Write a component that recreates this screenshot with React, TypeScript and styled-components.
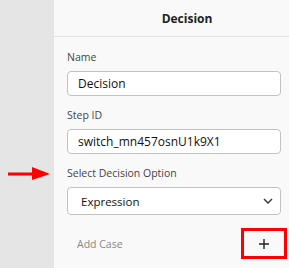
import React from "react";
import styled, { createGlobalStyle } from "styled-components";

const Global = createGlobalStyle`
  html, body { margin: 0; padding: 0; overflow: hidden; }
  body { font-family: "Open Sans", "Noto Sans", sans-serif; background: #e5e5e5; }
`;

const Page = styled.div`
  display: flex;
  width: 320px;
  height: 268px;
`;

const Side = styled.div`
  width: 54px;
  flex: none;
  background: #e5e5e5;
  display: flex;
  flex-direction: column;
  padding-top: 167px;
  box-sizing: border-box;
`;

const Panel = styled.div`
  width: 266px;
  flex: none;
  background: #f9f9f9;
  display: flex;
  flex-direction: column;
`;

const Header = styled.div`
  height: 37px;
  border-bottom: 1px solid #e2e2e2;
  display: flex;
  align-items: center;
  justify-content: center;
  font-size: 12px;
  font-weight: 700;
  color: #222;
  box-sizing: border-box;
`;

const Body = styled.div`
  padding: 13px 0 0 13px;
  display: flex;
  flex-direction: column;
`;

const Field = styled.div<{ $gap: number }>`
  display: flex;
  flex-direction: column;
  margin-bottom: ${(p) => p.$gap}px;
`;

const Label = styled.div`
  font-size: 10.5px;
  color: #444;
  line-height: 14px;
  margin-bottom: 7px;
`;

const Input = styled.div<{ $h: number }>`
  width: 214px;
  height: ${(p) => p.$h}px;
  box-sizing: border-box;
  border: 1px solid #c2c2c2;
  border-radius: 4px;
  background: #fff;
  display: flex;
  align-items: center;
  padding: 0 10px;
  font-size: 12px;
  color: #111;
`;

const SelectBox = styled(Input)`
  padding: 0 7px 0 13px;
  justify-content: space-between;
  font-size: 11.5px;
`;

const AddRow = styled.div`
  display: flex;
  align-items: center;
  justify-content: space-between;
  width: 220px;
  margin-top: 13px;
  padding-left: 10px;
  box-sizing: border-box;
`;

const AddText = styled.span`
  font-size: 10.5px;
  color: #888;
`;

const PlusBox = styled.div`
  width: 46px;
  height: 31px;
  box-sizing: border-box;
  border: 3px solid #f00;
  display: flex;
  align-items: center;
  justify-content: center;
`;

export default function App() {
  return (
    <>
      <Global />
      <Page>
        <Side>
          <svg width="54" height="14" viewBox="0 0 54 14">
            <rect x="8" y="5.5" width="26" height="3" fill="#f00" />
            <polygon points="32,0 50,7 32,13" fill="#f00" />
          </svg>
        </Side>
        <Panel>
          <Header>Decision</Header>
          <Body>
            <Field $gap={12}>
              <Label>Name</Label>
              <Input $h={25}>Decision</Input>
            </Field>
            <Field $gap={12}>
              <Label>Step ID</Label>
              <Input $h={25}>switch_mn457osnU1k9X1</Input>
            </Field>
            <Field $gap={0}>
              <Label>Select Decision Option</Label>
              <SelectBox $h={28}>
                <span>Expression</span>
                <svg width="10" height="6" viewBox="0 0 10 6">
                  <path d="M1 1 L5 5 L9 1" fill="none" stroke="#333" strokeWidth="1.4" />
                </svg>
              </SelectBox>
            </Field>
            <AddRow>
              <AddText>Add Case</AddText>
              <PlusBox>
                <svg width="10" height="10" viewBox="0 0 10 10">
                  <path d="M5 0 V10 M0 5 H10" stroke="#222" strokeWidth="1.4" />
                </svg>
              </PlusBox>
            </AddRow>
          </Body>
        </Panel>
      </Page>
    </>
  );
}
